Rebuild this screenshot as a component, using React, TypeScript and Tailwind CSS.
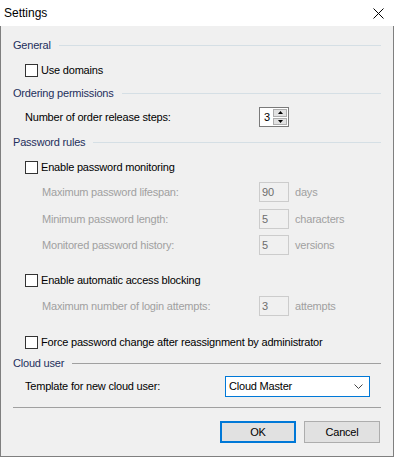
import { ReactNode } from "react";

const Header = ({ label, gray }: { label: string; gray?: boolean }): ReactNode => (
  <div className="h-[20px] flex items-center gap-[8px] text-[#1e2f5c]">
    <span>{label}</span>
    <div className={gray ? "flex-1 h-px bg-[#a0a0a0]" : "flex-1 h-px bg-[#d5dfe5]"} />
  </div>
);

const Check = ({ label, className }: { label: string; className: string }): ReactNode => (
  <div className={`h-[20px] flex items-center pl-[12px] ${className}`}>
    <span className="w-[13px] h-[13px] border border-[#333333] bg-white" />
    <span className="ml-[3px]">{label}</span>
  </div>
);

const Field = ({ label, value, unit, className }: { label: string; value: string; unit: string; className: string }): ReactNode => (
  <div className={`h-[20px] flex items-center pl-[29px] text-[#a0a0a0] ${className}`}>
    <span className="w-[217px]">{label}</span>
    <div className="w-[30px] h-[20px] border border-[#cccccc] flex items-center pl-[2px] text-[#6d6d6d]">{value}</div>
    <span className="ml-[6px]">{unit}</span>
  </div>
);

const App = (): ReactNode => {
  return (
    <div className="w-[394px] h-[457px] flex flex-col font-['Liberation_Sans',Arial,sans-serif] text-[11px] tracking-[-0.2px] text-black">
      <div className="h-[26px] bg-white flex items-center justify-between pl-[4px] pr-[10px] text-[12px] tracking-normal">
        <span>Settings</span>
        <svg width="11" height="11" viewBox="0 0 11 11" className="mt-[1px]">
          <path d="M0.5 0.5 L10.5 10.5 M10.5 0.5 L0.5 10.5" stroke="#000" strokeWidth="1" />
        </svg>
      </div>
      <div className="flex-1 flex flex-col px-[12px] bg-[#f0f0f0] border-x border-b border-[#7f7f7f]">
        <div className="mt-[9px]">
          <Header label="General" />
        </div>
        <Check label="Use domains" className="mt-[5px]" />
        <div className="mt-[3px]">
          <Header label="Ordering permissions" />
        </div>
        <div className="mt-[4px] h-[20px] flex items-center pl-[12px]">
          <span className="w-[234px]">Number of order release steps:</span>
          <div className="w-[30px] h-[20px] border border-[#7a7a7a] bg-white flex">
            <span className="flex-1 flex items-center pl-[4px]">3</span>
            <div className="w-[16px] flex flex-col gap-px p-px">
              <div className="flex-1 bg-[#e1e1e1] border border-[#adadad] flex items-center justify-center">
                <svg width="5" height="3" viewBox="0 0 5 3"><path d="M2.5 0 L5 3 L0 3 Z" fill="#000" /></svg>
              </div>
              <div className="flex-1 bg-[#e1e1e1] border border-[#adadad] flex items-center justify-center">
                <svg width="5" height="3" viewBox="0 0 5 3"><path d="M0 0 L5 0 L2.5 3 Z" fill="#000" /></svg>
              </div>
            </div>
          </div>
        </div>
        <div className="mt-[5px]">
          <Header label="Password rules" />
        </div>
        <Check label="Enable password monitoring" className="mt-[5px]" />
        <Field label="Maximum password lifespan:" value="90" unit="days" className="mt-[5px]" />
        <Field label="Minimum password length:" value="5" unit="characters" className="mt-[7px]" />
        <Field label="Monitored password history:" value="5" unit="versions" className="mt-[6px]" />
        <Check label="Enable automatic access blocking" className="mt-[15px]" />
        <Field label="Maximum number of login attempts:" value="3" unit="attempts" className="mt-[6px]" />
        <Check label="Force password change after reassignment by administrator" className="mt-[16px]" />
        <div className="mt-[1px]">
          <Header label="Cloud user" gray />
        </div>
        <div className="mt-[3px] h-[21px] flex items-center pl-[12px]">
          <span className="w-[200px]">Template for new cloud user:</span>
          <div className="w-[145px] h-[21px] border border-[#0078d7] bg-white flex items-center justify-between pl-[3px] pr-[6px]">
            <span>Cloud Master</span>
            <svg width="9" height="5" viewBox="0 0 9 5">
              <path d="M0.5 0.5 L4.5 4.5 L8.5 0.5" stroke="#444" strokeWidth="1" fill="none" />
            </svg>
          </div>
        </div>
        <div className="mt-[10px] h-px bg-[#a0a0a0]" />
        <div className="mt-[13px] flex justify-end gap-[8px] mr-[1px]">
          <button className="w-[76px] h-[22px] border-2 border-[#0078d7] bg-[#e1e1e1] flex items-center justify-center">OK</button>
          <button className="w-[76px] h-[22px] border border-[#adadad] bg-[#e1e1e1] flex items-center justify-center">Cancel</button>
        </div>
      </div>
    </div>
  );
};

export default App;
